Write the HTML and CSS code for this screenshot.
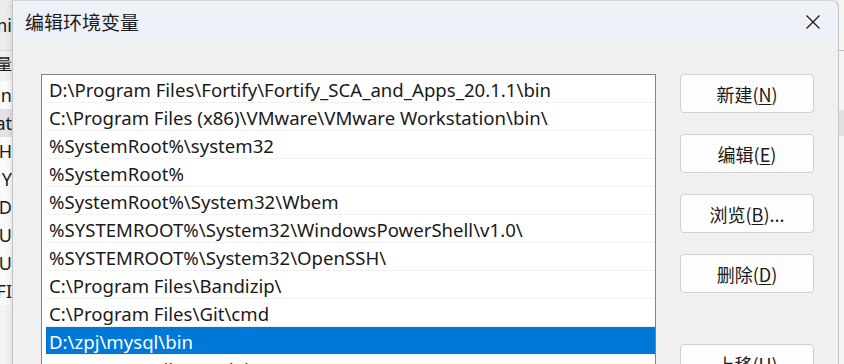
FILE: index.html
```html
<!DOCTYPE html>
<html lang="zh-CN">
<head>
<meta charset="UTF-8">
<title>编辑环境变量</title>
<link rel="stylesheet" href="styles.css">
</head>
<body>

<div class="behind behind-left">
    <div class="behind-title">mi</div>
    <div class="behind-tab">变量</div>
    <div class="behind-row">On</div>
    <div class="behind-row picked">at</div>
    <div class="behind-row">H</div>
    <div class="behind-row">Y</div>
    <div class="behind-row">ID</div>
    <div class="behind-row">U</div>
    <div class="behind-row">TU</div>
    <div class="behind-row">FI</div>
</div>

<div class="dialog">
    <div class="titlebar">
        <span class="title">编辑环境变量</span>
        <button class="close" aria-label="关闭">
            <svg width="16" height="16" viewBox="0 0 16 16">
                <path d="M1.5 1.5 L14.5 14.5 M14.5 1.5 L1.5 14.5" stroke="#1a1a1a" stroke-width="1.3" fill="none"/>
            </svg>
        </button>
    </div>

    <div class="content">
        <ul class="pathlist">
            <li>D:\Program Files\Fortify\Fortify_SCA_and_Apps_20.1.1\bin</li>
            <li>C:\Program Files (x86)\VMware\VMware Workstation\bin\</li>
            <li>%SystemRoot%\system32</li>
            <li>%SystemRoot%</li>
            <li>%SystemRoot%\System32\Wbem</li>
            <li>%SYSTEMROOT%\System32\WindowsPowerShell\v1.0\</li>
            <li>%SYSTEMROOT%\System32\OpenSSH\</li>
            <li>C:\Program Files\Bandizip\</li>
            <li>C:\Program Files\Git\cmd</li>
            <li class="selected">D:\zpj\mysql\bin</li>
            <li>C:\Program Files\nodejs\</li>
        </ul>

        <div class="actions">
            <button class="btn">新建(<u>N</u>)</button>
            <button class="btn">编辑(<u>E</u>)</button>
            <button class="btn">浏览(<u>B</u>)...</button>
            <button class="btn">删除(<u>D</u>)</button>
            <button class="btn spaced">上移(<u>U</u>)</button>
        </div>
    </div>
</div>

<div class="behind behind-right">
    <div class="behind-line"></div>
    <div class="behind-band"></div>
</div>

</body>
</html>
```

FILE: styles.css
```css
body {
    margin: 0;
    width: 844px;
    height: 364px;
    overflow: hidden;
    display: flex;
    background-color: #f3f3f3;
    font-family: "Noto Sans", "Noto Sans CJK SC", sans-serif;
    color: #1a1a1a;
}

/* window lying behind the dialog */
.behind {
    flex: none;
    overflow: hidden;
    background-color: #f3f3f3;
}

.behind-left {
    width: 12px;
    font-size: 18px;
    line-height: 28px;
    white-space: nowrap;
    direction: rtl;
}

.behind-title {
    height: 50px;
    line-height: 50px;
    border-bottom: 1px solid #d9d9d9;
    background-color: #ececec;
}

.behind-tab {
    height: 30px;
    line-height: 26px;
    font-size: 16px;
    background-color: #f0f0f0;
}

.behind-row {
    height: 28px;
    background-color: #fafafa;
}

.behind-row.picked {
    background-color: #e2e2e2;
}

.behind-right {
    width: 6px;
    background-color: #f5f5f5;
}

.behind-line {
    margin-top: 50px;
    border-top: 1px solid #bdbdbd;
    height: 59px;
}

.behind-band {
    height: 26px;
    background-color: #e0e0e0;
}

/* dialog */
.dialog {
    flex: none;
    width: 825px;
    height: 372px;
    background-color: #f0f0f0;
    border-left: 1px solid #c4c4c4;
    border-top: 1px solid #d4d4d4;
    border-right: 1px solid #c4c4c4;
    border-top-right-radius: 8px;
    overflow: hidden;
    box-shadow: 0 0 6px rgba(0, 0, 0, 0.15);
}

.titlebar {
    height: 42px;
    display: flex;
    align-items: center;
    justify-content: space-between;
    background-color: #eef1f7;
}

.title {
    padding-left: 12px;
    font-size: 19px;
    font-family: "Noto Sans CJK SC", sans-serif;
    padding-bottom: 2px;
}

.close {
    width: 46px;
    height: 42px;
    border: none;
    background: none;
    display: flex;
    align-items: center;
    justify-content: center;
    padding: 0 4px 0 0;
}

.content {
    display: flex;
    align-items: flex-start;
    padding: 31px 0 0 28px;
    gap: 24px;
}

.pathlist {
    list-style: none;
    margin: 0;
    padding: 0 0 0 4px;
    width: 609px;
    height: 320px;
    background-color: #fff;
    border: 1px solid #838383;
    font-size: 18.6px;
}

.pathlist li {
    height: 25px;
    padding: 2px 0 0 3px;
    line-height: 25px;
    border-bottom: 1px solid #f0f0f0;
    white-space: nowrap;
}

.pathlist li.selected {
    background-color: #0078d7;
    color: #fff;
}

.actions {
    display: flex;
    flex-direction: column;
    gap: 21px;
}

.btn {
    width: 134px;
    height: 39px;
    background-color: #fdfdfd;
    border: 1px solid #d0d0d0;
    border-radius: 4px;
    font-family: "Noto Sans CJK SC", sans-serif;
    font-size: 18px;
    color: #1a1a1a;
    padding: 0;
}

.btn u {
    text-underline-offset: 2px;
}

.btn.spaced {
    margin-top: 30px;
}
```
